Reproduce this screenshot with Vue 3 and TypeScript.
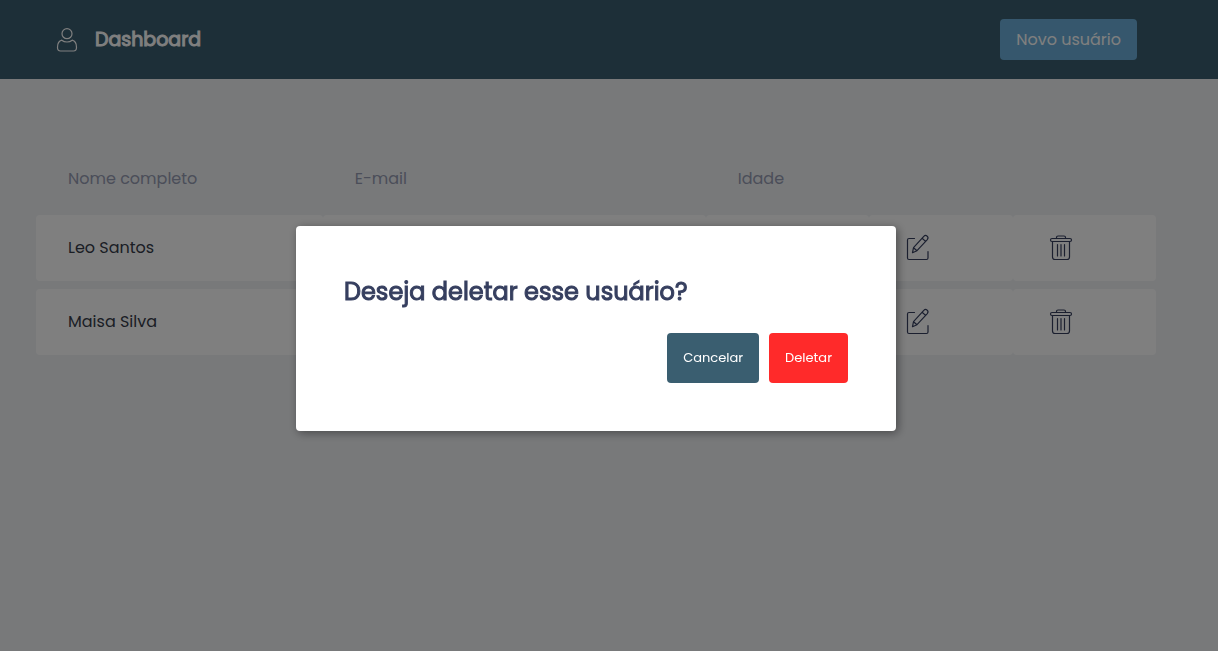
<script setup lang="ts">
import { ref } from 'vue'

interface User {
  id: number
  name: string
  email: string
  age: string
}

const users = ref<User[]>([
  { id: 1, name: 'Leo Santos', email: '', age: '' },
  { id: 2, name: 'Maisa Silva', email: '', age: '' },
])

const selected = ref<User | null>(users.value[0])

function close(): void {
  selected.value = null
}

function remove(): void {
  users.value = users.value.filter((user) => user.id !== selected.value?.id)
  close()
}
</script>

<template>
  <div class="page">
    <header class="topbar">
      <div class="topbar-content">
        <div class="brand">
          <svg class="icon" viewBox="0 0 32 32" aria-hidden="true">
            <circle cx="16" cy="9.7" r="5" />
            <path d="M10.800 16.200C7.800 16.900 6.500 19.500 6.500 23.500Q6.500 27 9.500 27H22.500Q25.500 27 25.500 23.500C25.500 19.500 24.200 16.900 21.200 16.200Q19 18 16 18T10.800 16.200Z" />
          </svg>
          <h1>Dashboard</h1>
        </div>
        <button class="new-user" type="button">Novo usuário</button>
      </div>
    </header>

    <main class="content">
      <table>
        <colgroup>
          <col class="col-name" />
          <col class="col-email" />
          <col class="col-age" />
          <col class="col-action" />
          <col class="col-action" />
        </colgroup>
        <thead>
          <tr>
            <th scope="col">Nome completo</th>
            <th scope="col">E-mail</th>
            <th scope="col">Idade</th>
            <td></td>
            <td></td>
          </tr>
        </thead>
        <tbody>
          <tr v-for="user in users" :key="user.id">
            <td>{{ user.name }}</td>
            <td>{{ user.email }}</td>
            <td>{{ user.age }}</td>
            <td>
              <button class="icon-button" type="button" aria-label="Editar">
                <svg class="icon" viewBox="0 0 32 32" aria-hidden="true">
                  <path d="M13.500 6.500H8Q6.500 6.500 6.500 8V26Q6.500 27.500 8 27.500H25.500Q27 27.500 27 26V19.500" />
                  <path d="M11.500 20.700L12.500 15.700L22.800 4.300Q24.400 2.700 26.200 4.200Q27.800 5.800 26.300 7.600L16 18.700L11.500 20.700ZM12.500 15.700L16 18.700M21.100 6.200L24.600 9.400" />
                </svg>
              </button>
            </td>
            <td>
              <button class="icon-button" type="button" aria-label="Deletar usuário" @click="selected = user">
                <svg class="icon" viewBox="0 0 32 32" aria-hidden="true">
                  <path d="M11.500 6.500V5.500Q11.500 4 13 4H19Q20.500 4 20.500 5.500V6.500" />
                  <rect x="5.500" y="6.500" width="21" height="3" rx="1.500" />
                  <path d="M7.500 9.500V25Q7.500 27.500 10 27.500H22Q24.500 27.500 24.500 25V9.500M12.500 12.500V24M16 12.500V24M19.500 12.500V24" />
                </svg>
              </button>
            </td>
          </tr>
        </tbody>
      </table>
    </main>

    <div v-if="selected" class="overlay">
      <section class="modal" role="dialog" aria-modal="true" aria-labelledby="dialog-title">
        <h2 id="dialog-title">Deseja deletar esse usuário?</h2>
        <div class="actions">
          <button class="cancel" type="button" @click="close">Cancelar</button>
          <button class="delete" type="button" @click="remove">Deletar</button>
        </div>
      </section>
    </div>
  </div>
</template>

<style>
body {
  margin: 0;
  background: #f0f2f5;
}
</style>

<style scoped>
* {
  box-sizing: border-box;
}

.page {
  min-height: 100vh;
  color: #363f5f;
  font-family: Poppins, Inter, sans-serif;
  font-size: 16px;
  line-height: 24px;
}

button {
  border: 0;
  border-radius: 4px;
  color: #fff;
  font-family: inherit;
  cursor: pointer;
}

h1,
h2 {
  font-weight: 400;
  -webkit-text-stroke: 1px currentColor;
}

.icon {
  display: block;
  width: 32px;
  height: 32px;
  fill: none;
  stroke: currentColor;
  stroke-width: 1.2;
  stroke-linecap: round;
  stroke-linejoin: round;
}

.topbar {
  padding: 19px 26px 19px 0;
  background: #3a5e70;
}

.topbar-content {
  display: flex;
  align-items: center;
  justify-content: space-between;
  max-width: 1120px;
  margin: 0 auto;
  padding: 0 19px 0 15px;
}

.brand {
  display: flex;
  align-items: center;
  gap: 12px;
  color: #fff;
}

h1 {
  margin: 0;
  font-size: 19px;
}

.new-user {
  height: 41px;
  padding: 0 16px;
  background: #6cafda;
  font-size: 16px;
}

.content {
  padding: 64px 26px 0 0;
}

table {
  width: 100%;
  max-width: 1120px;
  margin: 0 auto;
  border-spacing: 0 8px;
  table-layout: fixed;
}

.col-name {
  width: 25.6%;
}

.col-email {
  width: 34.2%;
}

.col-age {
  width: 14.6%;
}

.col-action {
  width: 12.8%;
}

th,
td {
  padding: 16px 32px;
  text-align: left;
}

th {
  color: #969cb3;
  font-weight: 400;
}

tbody td {
  height: 66px;
  border-radius: 4px;
  background: #fff;
  color: #363c4a;
}

.icon-button {
  display: block;
  padding: 0;
  background: transparent;
  color: #363f5f;
}

.overlay {
  position: fixed;
  inset: 0;
  display: flex;
  align-items: center;
  justify-content: center;
  padding: 6px 26px 0 0;
  background: rgba(0, 0, 0, 0.5);
}

.modal {
  width: 100%;
  max-width: 600px;
  padding: 48px;
  border-radius: 4px;
  background: #fff;
  box-shadow: 2px 2px 10px rgba(0, 0, 0, 0.4);
}

h2 {
  margin: 0 0 23px;
  font-size: 24px;
  line-height: 36px;
}

.actions {
  display: flex;
  justify-content: flex-end;
  gap: 10px;
}

.actions button {
  height: 50px;
  padding: 0 16px;
  font-size: 13px;
}

.cancel {
  background: #3a5e70;
}

.delete {
  background: #ff2a2a;
}
</style>
